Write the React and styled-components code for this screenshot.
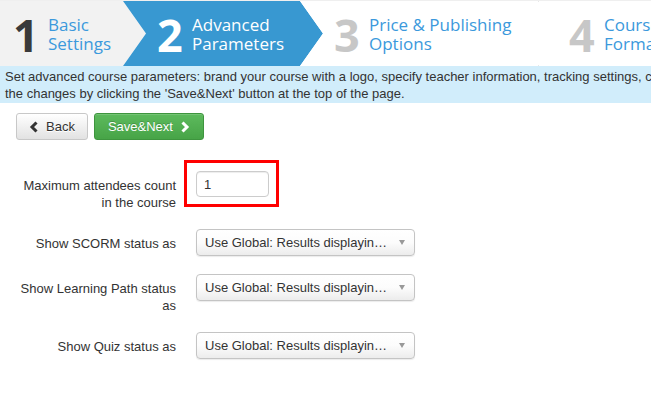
import React from "react";
import styled, { createGlobalStyle } from "styled-components";

const Global = createGlobalStyle`
  html, body { margin: 0; padding: 0; background: #fff; overflow: hidden; }
  body { font-family: "Liberation Sans", Arial, sans-serif; font-size: 13px; color: #333; }
`;

const Page = styled.div`
  width: 651px;
  overflow: hidden;
`;

const Wizard = styled.div`
  display: flex;
  flex-wrap: nowrap;
  border-top: 1px solid #efefef;
  background: #fff;
  height: 65px;
  font-family: "Open Sans", "Liberation Sans", sans-serif;
`;

const A = 23;

const Step = styled.div`
  position: relative;
  flex: 0 0 auto;
  width: ${(p) => p.$w}px;
  margin-left: ${(p) => (p.$first ? 0 : -A)}px;
  padding-left: ${(p) => p.$pl}px;
  box-sizing: border-box;
  display: flex;
  align-items: center;
  background: ${(p) => p.$bg};
  clip-path: ${(p) =>
    p.$first
      ? `polygon(0 0, calc(100% - ${A}px) 0, 100% 50%, calc(100% - ${A}px) 100%, 0 100%)`
      : p.$arrow
      ? `polygon(0 0, calc(100% - ${A}px) 0, 100% 50%, calc(100% - ${A}px) 100%, 0 100%, ${A}px 50%)`
      : "none"};
`;

const Num = styled.span`
  flex: 0 0 25px;
  width: 25px;
  margin-right: 10px;
  font-size: 45px;
  font-weight: 700;
  line-height: 45px;
  color: ${(p) => p.$c};
  margin-top: 2px;
`;

const StepLabel = styled.span`
  font-size: 17px;
  line-height: 19px;
  color: ${(p) => p.$c};
  white-space: nowrap;
`;

const Sep = styled.svg`
  position: absolute;
  right: 0;
  top: 0;
`;

const Info = styled.div`
  background: #d1edfb;
  padding: 2px 5px 1px;
  line-height: 17px;
  white-space: nowrap;
  overflow: hidden;
  color: #333;
`;

const Content = styled.div`
  padding: 10px 0 0 16px;
`;

const Toolbar = styled.div`
  display: flex;
  gap: 6px;
`;

const Btn = styled.button`
  height: 27px;
  box-sizing: border-box;
  display: inline-flex;
  align-items: center;
  gap: 7px;
  padding: 0 ${(p) => (p.$ok ? "13px" : "12px")};
  font-family: "Liberation Sans", Arial, sans-serif;
  font-size: 13px;
  border-radius: 3px;
  cursor: pointer;
  ${(p) =>
    p.$ok
      ? `
    color: #fff;
    background: linear-gradient(#5dba5d, #47a447);
    border: 1px solid #3e953e;
    text-shadow: 0 -1px 0 rgba(0,0,0,.2);
    box-shadow: inset 0 1px 0 rgba(255,255,255,.15);
  `
      : `
    color: #333;
    background: linear-gradient(#fff, #e2e2e2);
    border: 1px solid #c8c8c8;
    text-shadow: 0 1px 0 #fff;
  `}
`;

const Form = styled.div`
  margin-top: 31px;
`;

const Row = styled.div`
  display: grid;
  grid-template-columns: 160px auto;
  column-gap: 20px;
  align-items: start;
  margin-bottom: 18px;
`;

const Label = styled.label`
  text-align: right;
  padding-top: 6px;
  line-height: 17px;
  color: #333;
`;

const Field = styled.div`
  position: relative;
  justify-self: start;
`;

const Highlight = styled.div`
  position: absolute;
  left: -12px;
  top: -11px;
  right: -10px;
  bottom: -10px;
  border: 3px solid #f00;
  pointer-events: none;
`;

const Input = styled.input`
  display: block;
  width: 73px;
  height: 26px;
  box-sizing: border-box;
  border: 1px solid #ccc;
  border-radius: 4px;
  padding: 0 7px;
  font-family: "Liberation Sans", Arial, sans-serif;
  font-size: 13px;
  color: #333;
  box-shadow: inset 0 1px 1px rgba(0,0,0,.075);
  outline: none;
`;

const Select = styled.div`
  width: 219px;
  height: 27px;
  box-sizing: border-box;
  border: 1px solid #c4c4c4;
  border-radius: 4px;
  background: linear-gradient(#fff 0%, #fcfcfc 50%, #ececec 100%);
  box-shadow: 0 1px 1px rgba(0,0,0,.08);
  display: flex;
  align-items: center;
  padding: 0 9px 0 8px;
  color: #333;
  white-space: nowrap;
`;

const SelectText = styled.span`
  flex: 1;
  overflow: hidden;
  text-overflow: ellipsis;
`;

const Caret = styled.span`
  width: 0;
  height: 0;
  margin-left: 5px;
  border-left: 3.5px solid transparent;
  border-right: 3.5px solid transparent;
  border-top: 5px solid #999;
`;

const Chevron = ({ dir, color }) => (
  <svg width="10" height="12" viewBox="0 0 10 12">
    <path
      d={dir === "left" ? "M7.5 1.5 L3 6 L7.5 10.5" : "M2.5 1.5 L7 6 L2.5 10.5"}
      fill="none"
      stroke={color}
      strokeWidth="3"
      strokeLinejoin="miter"
    />
  </svg>
);

const steps = [
  { n: "1", t: ["Basic", "Settings"], bg: "#f2f2f2", nc: "#3a3a3a", lc: "#3b99dc", w: 146, pl: 13, first: true },
  { n: "2", t: ["Advanced", "Parameters"], bg: "#3898d1", nc: "#fff", lc: "#fff", w: 200, pl: 34, arrow: true },
  { n: "3", t: ["Price & Publishing", "Options"], bg: "#fff", nc: "#c7c7c7", lc: "#3b99dc", w: 262, pl: 34, arrow: true, sep: true },
  { n: "4", t: ["Course", "Format"], bg: "#fff", nc: "#c7c7c7", lc: "#3b99dc", w: 200, pl: 30 },
];

const selects = [
  { label: "Show SCORM status as" },
  { label: "Show Learning Path status as" },
  { label: "Show Quiz status as" },
];

export default function App() {
  return (
    <Page>
      <Global />
      <Wizard>
        {steps.map((s) => (
          <Step key={s.n} $w={s.w} $pl={s.pl} $bg={s.bg} $first={s.first} $arrow={s.arrow}>
            <Num $c={s.nc}>{s.n}</Num>
            <StepLabel $c={s.lc}>
              {s.t[0]}
              <br />
              {s.t[1]}
            </StepLabel>
            {s.sep && (
              <Sep width="24" height="65" viewBox="0 0 24 65">
                <path d="M0.5 0 L23 32.5 L0.5 65" fill="none" stroke="#dcdcdc" strokeWidth="1" />
              </Sep>
            )}
          </Step>
        ))}
      </Wizard>
      <Info>
        Set advanced course parameters: brand your course with a logo, specify teacher information, tracking settings, certificates and other options. Save
        <br />
        the changes by clicking the 'Save&amp;Next' button at the top of the page.
      </Info>
      <Content>
        <Toolbar>
          <Btn>
            <Chevron dir="left" color="#333" />
            Back
          </Btn>
          <Btn $ok>
            Save&amp;Next
            <Chevron dir="right" color="#fff" />
          </Btn>
        </Toolbar>
        <Form>
          <Row>
            <Label>Maximum attendees count in the course</Label>
            <Field>
              <Input defaultValue="1" />
              <Highlight />
            </Field>
          </Row>
          {selects.map((s) => (
            <Row key={s.label}>
              <Label>{s.label}</Label>
              <Field>
                <Select>
                  <SelectText>Use Global: Results displaying as percentage</SelectText>
                  <Caret />
                </Select>
              </Field>
            </Row>
          ))}
        </Form>
      </Content>
    </Page>
  );
}
